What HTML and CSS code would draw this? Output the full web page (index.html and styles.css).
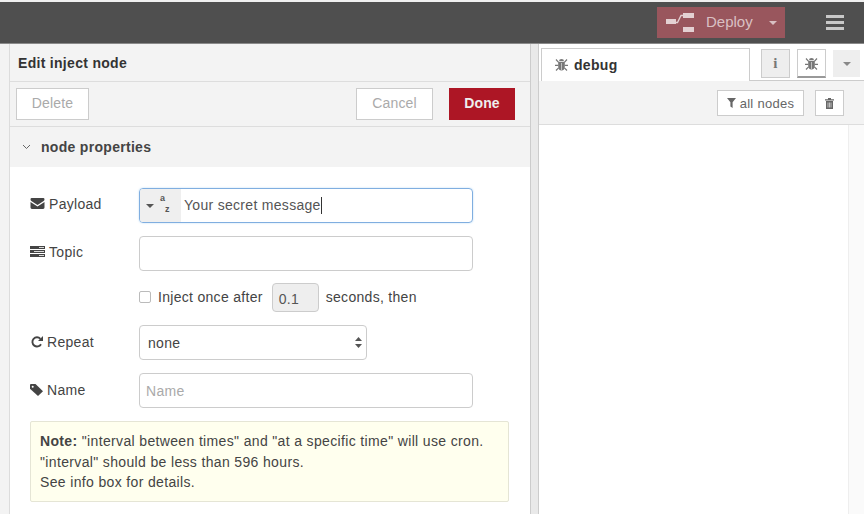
FILE: index.html
```html
<!DOCTYPE html>
<html lang="en">
<head>
    <meta charset="UTF-8">
    <title>Edit inject node</title>
    <link rel="stylesheet" href="styles.css">
</head>
<body>
<header class="topbar">
    <div class="deploy">
        <svg class="deploy-icon" width="28" height="19" viewBox="0 0 28 19">
            <rect x="0" y="6" width="10" height="5" fill="#e3d0d2"/>
            <rect x="17" y="0" width="11" height="5" fill="#e3d0d2"/>
            <rect x="17" y="14" width="11" height="5" fill="#e3d0d2"/>
            <path d="M10 9.5 L11.5 9.5 L15 2.5 L17 2.5" fill="none" stroke="#e3d0d2" stroke-width="1.3"/>
        </svg>
        <span class="deploy-label">Deploy</span>
        <span class="caret caret-deploy"></span>
    </div>
    <div class="menu-btn"><span></span><span></span><span></span></div>
</header>
<main class="workspace">
    <div class="edge"></div>
    <section class="tray">
        <div class="tray-title">Edit inject node</div>
        <div class="tray-actions">
            <button class="btn btn-muted">Delete</button>
            <div class="spacer"></div>
            <button class="btn btn-muted btn-cancel">Cancel</button>
            <button class="btn btn-done">Done</button>
        </div>
        <div class="section-head">
            <svg class="chevron" width="9" height="6" viewBox="0 0 9 6"><path d="M1 1 L4.5 4.5 L8 1" fill="none" stroke="#666" stroke-width="1"/></svg>
            <span>node properties</span>
        </div>
        <div class="form">
            <div class="row row-payload">
                <label class="row-label">
                    <svg class="ico" width="15" height="11" viewBox="0 0 14 11"><path d="M1.2 0 H12.8 Q14 0 14 1.4 Q14 2.4 12.8 3.2 L7 7 L1.2 3.2 Q0 2.4 0 1.4 Q0 0 1.2 0 Z M0 4 L7 8.6 L14 4 V9.6 Q14 11 12.6 11 H1.4 Q0 11 0 9.6 Z" fill="#444"/></svg>
                    Payload
                </label>
                <div class="typed-input">
                    <div class="type-select">
                        <span class="caret caret-type"></span>
                        <span class="az"><i>a</i><i>z</i></span>
                    </div>
                    <span class="typed-value">Your secret message</span><span class="cursor"></span>
                </div>
            </div>
            <div class="row row-topic">
                <label class="row-label">
                    <svg class="ico" width="15" height="11" viewBox="0 0 15 11"><path d="M0 0 H15 V3 H0 Z M0 4 H15 V7 H0 Z M0 8 H15 V11 H0 Z" fill="#444"/><path d="M9 1.5 H14 M4 5.5 H14 M9 9.5 H14" stroke="#fff" stroke-width=".8"/></svg>
                    Topic
                </label>
                <div class="text-input"></div>
            </div>
            <div class="row-once">
                <span class="checkbox"></span>
                <span>Inject once after</span>
                <span class="delay">0.1</span>
                <span>seconds, then</span>
            </div>
            <div class="row row-repeat">
                <label class="row-label label-low">
                    <svg class="ico ico-inset" width="12" height="12" viewBox="0 0 12 12"><path d="M10 8.2 A4.6 4.6 0 1 1 9.4 2.8" fill="none" stroke="#444" stroke-width="1.9"/><path d="M12 0 V5 H7 Z" fill="#444"/></svg>
                    Repeat
                </label>
                <div class="select-box">
                    <span>none</span>
                    <svg width="7" height="11" viewBox="0 0 7 11"><path d="M3.5 0 L7 4 H0 Z M0 7 H7 L3.5 11 Z" fill="#555"/></svg>
                </div>
            </div>
            <div class="row row-name">
                <label class="row-label label-low">
                    <svg class="ico" width="13" height="12" viewBox="0 0 13 12"><path d="M0 1 Q0 0 1 0 H5.5 L13 7.2 L8 12 L0 4.8 Z" fill="#444"/><circle cx="2.7" cy="2.7" r="1" fill="#fff"/></svg>
                    Name
                </label>
                <div class="text-input placeholder">Name</div>
            </div>
            <div class="note">
                <b>Note:</b> "interval between times" and "at a specific time" will use cron.<br>
                "interval" should be less than 596 hours.<br>
                See info box for details.
            </div>
        </div>
    </section>
    <div class="divider"></div>
    <aside class="sidebar">
        <div class="tabs">
            <div class="tab">
                <svg class="bug" width="13" height="13" viewBox="0 0 13 13"><use href="#bug"/></svg>
                <span>debug</span>
            </div>
            <div class="tab-tools">
                <div class="tool-btn tool-info">i</div>
                <div class="tool-btn tool-active"><svg width="13" height="13" viewBox="0 0 13 13"><use href="#bug"/></svg></div>
                <div class="tool-btn tool-more"><span class="caret caret-more"></span></div>
            </div>
        </div>
        <div class="debug-bar">
            <div class="small-btn">
                <svg width="9" height="10" viewBox="0 0 9 10"><path d="M0 0 H9 L5.6 4.2 V10 L3.4 8.6 V4.2 Z" fill="#666"/></svg>
                all nodes
            </div>
            <div class="small-btn small-trash">
                <svg width="9" height="11" viewBox="0 0 9 11"><path d="M3 0 H6 V1.2 H9 V2.4 H0 V1.2 H3 Z M1 3 H8 V11 H1 Z" fill="#666"/><path d="M3 4.5 V9.5 M4.5 4.5 V9.5 M6 4.5 V9.5" stroke="#fff" stroke-width=".6"/></svg>
            </div>
        </div>
        <div class="debug-body"><div class="scroll-gutter"></div></div>
    </aside>
</main>
<svg width="0" height="0" class="defs">
    <symbol id="bug" viewBox="0 0 13 13">
        <path d="M4 3.2 Q4 1 6.5 1 Q9 1 9 3.2 Z M3.2 4 H9.8 V8.5 Q9.8 12.6 6.5 12.6 Q3.2 12.6 3.2 8.5 Z" fill="#777"/>
        <path d="M1 1.5 L3.6 4.4 M12 1.5 L9.4 4.4 M0 7.3 H3.4 M13 7.3 H9.6 M1 12.5 L3.6 9.8 M12 12.5 L9.4 9.8" stroke="#777" stroke-width="1.2"/>
        <path d="M6.5 5 V12" stroke="#ddd" stroke-width=".7"/>
    </symbol>
</svg>
</body>
</html>
```
FILE: styles.css
```css
* {
    box-sizing: border-box;
}

html,
body {
    margin: 0;
    height: 100%;
    overflow: hidden;
}

body {
    font-family: "Liberation Sans", Arial, sans-serif;
    font-size: 14px;
    letter-spacing: 0.3px;
    color: #444;
    background: #fff;
}

.defs {
    position: absolute;
}

.topbar {
    height: 44px;
    background: #4f4f4f;
    border-top: 2px solid #f0f0f0;
    border-bottom: 1px solid #8a8a8a;
    display: flex;
    justify-content: flex-end;
    align-items: flex-start;
}

.deploy {
    width: 128px;
    height: 31px;
    margin-top: 5px;
    margin-right: 41px;
    background: #99565d;
    display: flex;
    align-items: center;
    padding-left: 9px;
    color: #d9c0c3;
    font-size: 15px;
    letter-spacing: 0;
}

.deploy-label {
    margin: -2px 0 0 12px;
}

.caret {
    display: block;
    width: 0;
    height: 0;
    border-left: 4px solid transparent;
    border-right: 4px solid transparent;
    border-top: 4px solid #555;
}

.caret-deploy {
    margin-left: 16px;
    border-top-color: #d9c0c3;
}

.menu-btn {
    width: 18px;
    margin-top: 13px;
    margin-right: 20px;
    display: flex;
    flex-direction: column;
    gap: 3px;
}

.menu-btn span {
    height: 3px;
    background: #c8c8c8;
}

.workspace {
    display: flex;
    height: 470px;
}

.edge {
    width: 10px;
    background: #f3f3f3;
    border-right: 1px solid #dcdcdc;
}

.tray {
    width: 520px;
    background: #fff;
    overflow: hidden;
}

.tray-title {
    height: 38px;
    background: #f3f3f3;
    border-bottom: 1px solid #ddd;
    padding: 11px 0 0 8px;
    font-weight: bold;
    color: #333;
}

.tray-actions {
    height: 45px;
    background: #f3f3f3;
    border-bottom: 1px solid #ddd;
    display: flex;
    align-items: flex-start;
    padding: 6px 15px 0 6px;
}

.spacer {
    flex: 1;
}

.btn {
    height: 32px;
    border: 1px solid #ccc;
    background: #fff;
    font-family: inherit;
    font-size: 14px;
    letter-spacing: 0.15px;
    padding: 0 0 2px;
}

.btn-muted {
    width: 73px;
    color: #aaa;
}

.btn-cancel {
    width: 77px;
    margin-right: 16px;
}

.btn-done {
    width: 66px;
    background: #ad1625;
    border-color: #ad1625;
    color: #eee;
    font-weight: bold;
}

.section-head {
    height: 40px;
    background: #f3f3f3;
    display: flex;
    align-items: center;
    padding-left: 12px;
    font-weight: bold;
    color: #444;
}

.chevron {
    margin-right: 10px;
}

.form {
    padding: 21px 0 0 20px;
}

.row {
    display: flex;
    align-items: center;
    height: 35px;
    margin-bottom: 13px;
}

.row-label {
    width: 109px;
    display: flex;
    align-items: center;
    gap: 4px;
    margin-top: -4px;
}

.label-low {
    margin-top: -2px;
}

.ico-inset {
    margin-left: 1px;
}

.typed-input {
    width: 334px;
    height: 35px;
    border: 1px solid #80aee0;
    border-radius: 4px;
    display: flex;
    align-items: center;
    overflow: hidden;
    box-shadow: 0 0 2px rgba(82, 168, 236, 0.4);
}

.type-select {
    width: 41px;
    height: 100%;
    background: #efefef;
    display: flex;
    align-items: center;
    padding-left: 6px;
    margin-right: 3px;
}

.az {
    display: flex;
    margin-left: 6px;
    font-size: 9px;
    color: #555;
    letter-spacing: 0;
}

.az i {
    font-style: normal;
    font-weight: bold;
}

.az i:first-child {
    margin-top: -5px;
}

.az i:last-child {
    margin-top: 6px;
    margin-left: 0;
}

.typed-value {
    color: #555;
    margin-top: -2px;
}

.cursor {
    width: 1px;
    height: 17px;
    background: #333;
}

.text-input {
    width: 334px;
    height: 35px;
    border: 1px solid #ccc;
    border-radius: 4px;
    background: #fff;
    padding: 9px 6px 0;
}

.placeholder {
    color: #aaa;
}

.row-once {
    display: flex;
    align-items: center;
    height: 29px;
    margin: -1px 0 13px 109px;
    color: #444;
}

.row-once span {
    margin-top: -1px;
}

.checkbox {
    width: 12px;
    height: 12px;
    border: 1px solid #bbb;
    border-radius: 2px;
    margin-right: 7px;
}

.row-once .delay {
    width: 47px;
    height: 29px;
    margin: 0 7px 0 9px;
    padding: 7px 0 0 6px;
    background: #eee;
    border: 1px solid #ccc;
    border-radius: 4px;
    color: #555;
}

.select-box {
    width: 228px;
    height: 35px;
    border: 1px solid #ccc;
    border-radius: 4px;
    display: flex;
    align-items: center;
    justify-content: space-between;
    padding: 0 4px 0 8px;
}

.note {
    width: 479px;
    height: 81px;
    margin-top: 13px;
    background: #ffffee;
    border: 1px solid #e5e5d5;
    border-radius: 2px;
    padding: 9px;
    line-height: 20.5px;
    letter-spacing: 0.35px;
    color: #444;
}

.divider {
    width: 9px;
    background: #e9e9e9;
    border-left: 1px solid #ccc;
    border-right: 1px solid #ccc;
}

.sidebar {
    flex: 1;
    display: flex;
    flex-direction: column;
    background: #fff;
}

.tabs {
    height: 37px;
    display: flex;
    padding-top: 4px;
}

.tab {
    width: 209px;
    height: 33px;
    margin-left: 2px;
    background: #fff;
    border: 1px solid #ccc;
    border-bottom: 0;
    display: flex;
    align-items: center;
    gap: 6px;
    padding: 0 0 1px 13px;
    font-weight: bold;
    color: #333;
}

.tab-tools {
    display: flex;
    flex: 1;
    align-items: flex-start;
    border-bottom: 1px solid #ccc;
    padding: 1px 0 0 11px;
    gap: 7px;
}

.tool-btn {
    width: 29px;
    height: 29px;
    display: flex;
    align-items: center;
    justify-content: center;
}

.tool-info {
    background: #eee;
    border: 1px solid #ccc;
    color: #777;
    font-family: "Liberation Serif", serif;
    font-weight: bold;
    font-size: 15px;
}

.tool-active {
    background: #fff;
    border: 1px solid #ccc;
    border-bottom: 2px solid #999;
}

.tool-more {
    width: 27px;
    height: 27px;
    margin-top: 1px;
    background: #eee;
}

.caret-more {
    border-top-color: #888;
}

.debug-bar {
    height: 44px;
    background: #f3f3f3;
    border-bottom: 1px solid #ddd;
    display: flex;
    justify-content: flex-end;
    align-items: flex-start;
    gap: 11px;
    padding: 9px 20px 0 0;
}

.small-btn {
    height: 26px;
    width: 87px;
    background: #fff;
    border: 1px solid #ccc;
    display: flex;
    align-items: center;
    justify-content: center;
    gap: 4px;
    font-size: 13px;
    letter-spacing: 0.3px;
    color: #666;
}

.small-trash {
    width: 29px;
}

.debug-body {
    flex: 1;
    display: flex;
    justify-content: flex-end;
}

.scroll-gutter {
    width: 16px;
    background: #fafafa;
    border-left: 1px solid #eee;
}
```
